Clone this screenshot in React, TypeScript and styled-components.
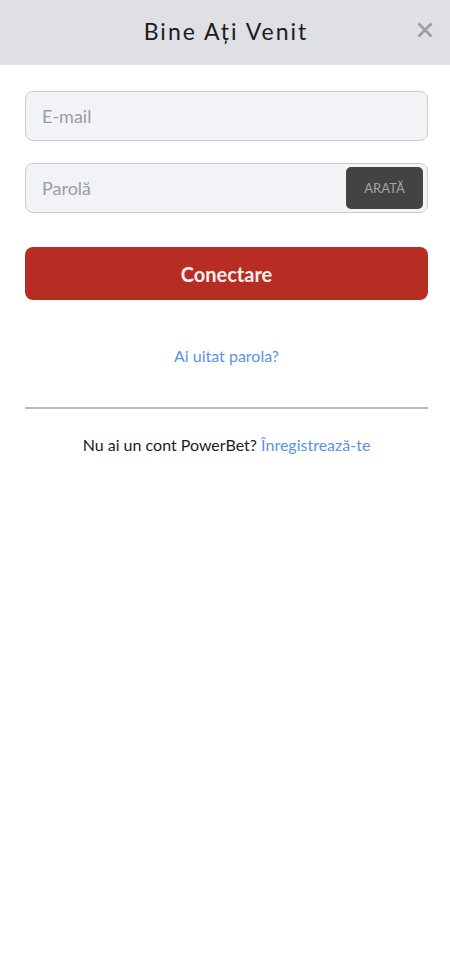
import React, { useState } from "react";
import styled, { createGlobalStyle } from "styled-components";

const GlobalStyle = createGlobalStyle`
  * {
    box-sizing: border-box;
  }
  body {
    margin: 0;
    background-color: #ffffff;
    color: #1b1c20;
    font-family: Lato, "Open Sans", sans-serif;
    font-size: 16px;
    line-height: 24px;
  }
`;

const Header = styled.header`
  position: relative;
  display: flex;
  align-items: center;
  justify-content: center;
  height: 65px;
  padding: 0 0 4px 2px;
  background-color: #dee0e4;
`;

const Title = styled.h1`
  margin: 0;
  font-size: 23px;
  font-weight: 400;
  line-height: 32px;
  letter-spacing: 2px;
`;

const CloseButton = styled.button`
  position: absolute;
  top: 18px;
  right: 13px;
  display: flex;
  align-items: center;
  justify-content: center;
  width: 24px;
  height: 24px;
  padding: 0;
  border: 0;
  background: none;
  color: #9b9d9f;
  cursor: pointer;
`;

const Content = styled.main`
  padding: 26px 22px 26px 25px;
`;

const Form = styled.form`
  display: flex;
  flex-direction: column;
`;

const Field = styled.div`
  display: flex;
  align-items: center;
  height: 50px;
  margin-bottom: 22px;
  padding-right: 4px;
  border: 1px solid #c9cbcd;
  border-radius: 8px;
  background-color: #f1f3f7;
`;

const Input = styled.input`
  flex: 1;
  min-width: 0;
  height: 100%;
  padding: 0 16px;
  border: 0;
  border-radius: 8px;
  outline: none;
  background: none;
  color: #1b1c20;
  font-family: inherit;
  font-size: 18px;

  &::placeholder {
    color: #9b9c9f;
    opacity: 1;
  }
`;

const ShowButton = styled.button`
  width: 77px;
  height: 42px;
  padding: 0;
  border: 0;
  border-radius: 5px;
  background-color: #434343;
  color: #a3a3a3;
  font-family: inherit;
  font-size: 13px;
  cursor: pointer;
`;

const SubmitButton = styled.button`
  height: 53px;
  margin-top: 12px;
  border: 0;
  border-radius: 8px;
  background-color: #b82d23;
  color: #faf0ef;
  font-family: inherit;
  font-size: 20px;
  font-weight: 700;
  cursor: pointer;
`;

const Centered = styled.p`
  margin: 0;
  text-align: center;
`;

const ForgotRow = styled(Centered)`
  margin-top: 44px;
`;

const Link = styled.a`
  color: #5c92e6;
  text-decoration: none;
`;

const Divider = styled.hr`
  height: 2px;
  margin: 39px 0 24px;
  border: 0;
  background-color: #bcbcbc;
`;

const App: React.FC = () => {
  const [visible, setVisible] = useState(false);

  return (
    <>
      <GlobalStyle />
      <Header>
        <Title>Bine Ați Venit</Title>
        <CloseButton type="button" aria-label="Închide">
          <svg width="16" height="16" viewBox="0 0 16 16" fill="none">
            <path d="M1.5 1.5L14.5 14.5M14.5 1.5L1.5 14.5" stroke="currentColor" strokeWidth="2.7" />
          </svg>
        </CloseButton>
      </Header>
      <Content>
        <Form onSubmit={(e) => e.preventDefault()}>
          <Field>
            <Input type="email" aria-label="E-mail" placeholder="E-mail" />
          </Field>
          <Field>
            <Input
              type={visible ? "text" : "password"}
              aria-label="Parolă"
              placeholder="Parolă"
            />
            <ShowButton type="button" onClick={() => setVisible(!visible)}>
              ARATĂ
            </ShowButton>
          </Field>
          <SubmitButton type="submit">Conectare</SubmitButton>
        </Form>
        <ForgotRow>
          <Link href="#forgot">Ai uitat parola?</Link>
        </ForgotRow>
        <Divider />
        <Centered>
          Nu ai un cont PowerBet? <Link href="#register">Înregistrează-te</Link>
        </Centered>
      </Content>
    </>
  );
};

export default App;
